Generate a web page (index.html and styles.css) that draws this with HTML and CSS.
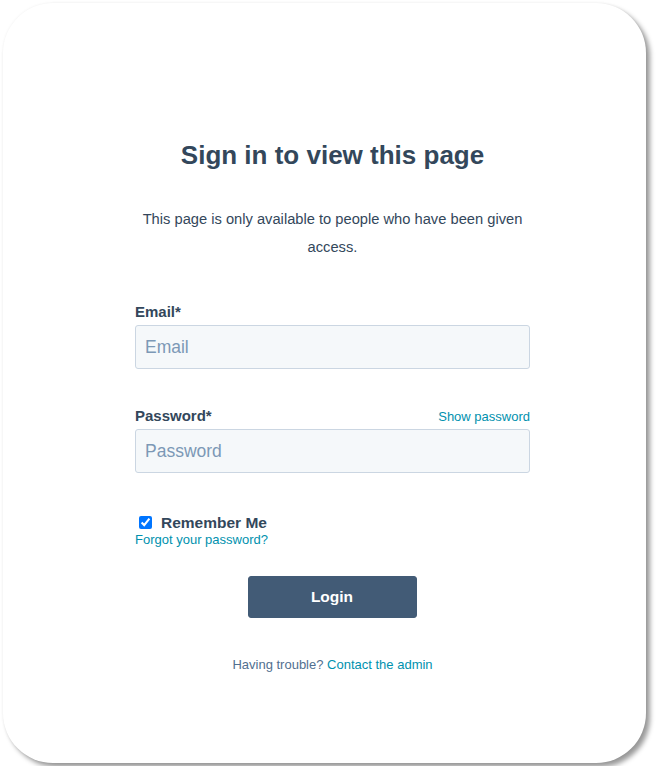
FILE: index.html
```html
<!DOCTYPE html>
<html lang="en">
<head>
    <meta charset="UTF-8">
    <meta name="viewport" content="width=device-width, initial-scale=1.0">
    <title>Sign in to view this page</title>
    <link rel="stylesheet" href="styles.css">
</head>
<body>
    <div class="card">
        <div class="login-box">
            <h1>Sign in to view this page</h1>
            <p class="intro">This page is only available to people who have been given access.</p>

            <form class="login-form">
                <div class="field email-field">
                    <div class="field-head">
                        <label for="email">Email*</label>
                    </div>
                    <input type="email" id="email" name="email" placeholder="Email">
                </div>

                <div class="field password-field">
                    <div class="field-head">
                        <label for="password">Password*</label>
                        <a href="#" class="link show-pass">Show password</a>
                    </div>
                    <input type="password" id="password" name="password" placeholder="Password">
                </div>

                <div class="remember">
                    <input type="checkbox" id="remember" checked>
                    <label for="remember">Remember Me</label>
                </div>
                <a href="#" class="link forgot">Forgot your password?</a>

                <div class="actions">
                    <button type="submit">Login</button>
                </div>
            </form>

            <p class="trouble">Having trouble? <a href="#" class="link">Contact the admin</a></p>
        </div>
    </div>
</body>
</html>
```

FILE: styles.css
```css
body {
    margin: 0;
    padding: 3px;
    background: #fff;
    font-family: "Liberation Sans", Arial, sans-serif;
    color: #33475b;
}

.card {
    width: 643px;
    height: 760px;
    box-sizing: border-box;
    background: #fff;
    border-radius: 50px;
    box-shadow: 4px 4px 5px rgba(0, 0, 0, 0.4), 0 0 3px rgba(0, 0, 0, 0.06);
    padding-top: 137px;
    padding-left: 132px;
}

.login-box {
    width: 395px;
}

h1 {
    margin: 0;
    text-align: center;
    font-size: 26px;
    line-height: 30px;
    font-weight: bold;
    color: #33475b;
}

.intro {
    margin: 35px -10px 0;
    text-align: center;
    font-size: 14.7px;
    line-height: 28px;
}

.login-form {
    display: flex;
    flex-direction: column;
}

.field {
    margin-top: 42px;
}

.password-field {
    margin-top: 38px;
}

.field-head {
    display: flex;
    justify-content: space-between;
    align-items: baseline;
    margin-bottom: 4px;
}

.field-head label {
    font-size: 15px;
    line-height: 18px;
    font-weight: bold;
}

.link {
    color: #0091ae;
    text-decoration: none;
}

.show-pass {
    font-size: 13px;
}

.field input {
    display: block;
    width: 100%;
    height: 44px;
    box-sizing: border-box;
    padding: 0 9px;
    font-family: inherit;
    font-size: 17.5px;
    color: #33475b;
    background: #f5f8fa;
    border: 1px solid #cbd6e2;
    border-radius: 3px;
}

.field input::placeholder {
    color: #7c98b6;
}

.remember {
    display: flex;
    align-items: center;
    margin-top: 41px;
    height: 18px;
    padding-left: 4px;
}

.remember input {
    margin: 0 9px 2px 0;
    width: 13px;
    height: 13px;
}

.remember label {
    font-size: 15.5px;
    font-weight: bold;
}

.forgot {
    font-size: 13px;
    line-height: 16px;
    align-self: flex-start;
}

.actions {
    display: flex;
    justify-content: center;
    margin-top: 28px;
}

button {
    width: 169px;
    height: 42px;
    margin-left: -1px;
    border: 1px solid #425b76;
    border-radius: 3px;
    background: #425b76;
    color: #fff;
    font-family: inherit;
    font-size: 15.5px;
    font-weight: bold;
    cursor: pointer;
}

.trouble {
    margin: 39px 0 0;
    text-align: center;
    font-size: 13px;
    line-height: 16px;
    color: #516f90;
}
```
